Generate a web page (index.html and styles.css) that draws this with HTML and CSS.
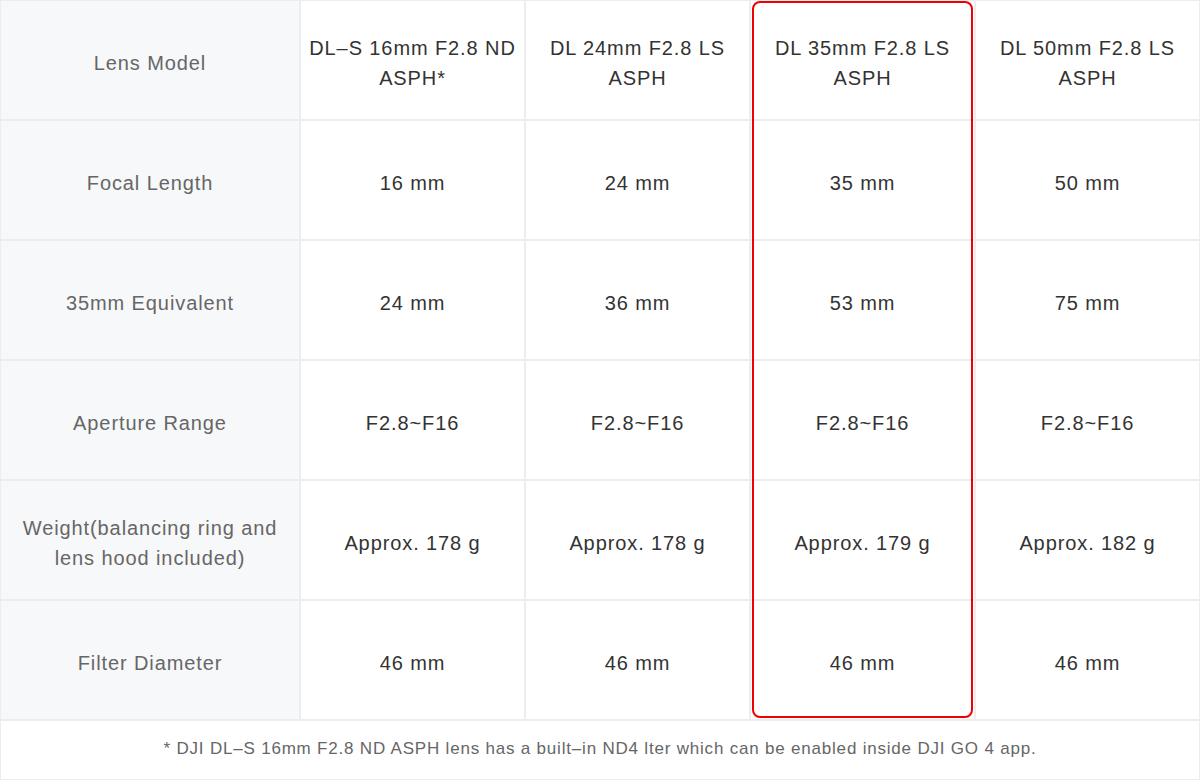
FILE: index.html
```html
<!DOCTYPE html>
<html lang="en">
<head>
<meta charset="utf-8">
<title>Lens Specs</title>
<link rel="stylesheet" href="styles.css">
</head>
<body>
<div class="specs">
  <table class="spec-table">
    <tbody>
      <tr>
        <th class="label">Lens Model</th>
        <td>DL–S 16mm F2.8 ND<br>ASPH*</td>
        <td>DL 24mm F2.8 LS<br>ASPH</td>
        <td>DL 35mm F2.8 LS<br>ASPH</td>
        <td>DL 50mm F2.8 LS<br>ASPH</td>
      </tr>
      <tr>
        <th class="label">Focal Length</th>
        <td>16 mm</td>
        <td>24 mm</td>
        <td>35 mm</td>
        <td>50 mm</td>
      </tr>
      <tr>
        <th class="label">35mm Equivalent</th>
        <td>24 mm</td>
        <td>36 mm</td>
        <td>53 mm</td>
        <td>75 mm</td>
      </tr>
      <tr>
        <th class="label">Aperture Range</th>
        <td>F2.8~F16</td>
        <td>F2.8~F16</td>
        <td>F2.8~F16</td>
        <td>F2.8~F16</td>
      </tr>
      <tr>
        <th class="label">Weight(balancing ring and<br>lens hood included)</th>
        <td>Approx. 178 g</td>
        <td>Approx. 178 g</td>
        <td>Approx. 179 g</td>
        <td>Approx. 182 g</td>
      </tr>
      <tr>
        <th class="label">Filter Diameter</th>
        <td>46 mm</td>
        <td>46 mm</td>
        <td>46 mm</td>
        <td>46 mm</td>
      </tr>
      <tr class="note-row">
        <td class="note" colspan="5">* DJI DL–S 16mm F2.8 ND ASPH lens has a built–in ND4 lter which can be enabled inside DJI GO 4 app.</td>
      </tr>
    </tbody>
  </table>
  <div class="highlight"></div>
</div>
</body>
</html>
```

FILE: styles.css
```css
html, body {
  margin: 0;
  padding: 0;
  background: #ffffff;
}

body {
  font-family: "Liberation Sans", Arial, sans-serif;
}

.specs {
  position: relative;
  width: 1200px;
}

.spec-table {
  border-collapse: separate;
  border-spacing: 0;
  table-layout: fixed;
  width: 1200px;
}

.spec-table th,
.spec-table td {
  border: 1px solid #ededed;
  height: 118px;
  padding: 6px 0 0 0;
  box-sizing: border-box;
  text-align: center;
  vertical-align: middle;
  font-size: 20px;
  line-height: 30px;
  letter-spacing: 0.9px;
  font-weight: normal;
  color: #333333;
  width: 225px;
}

.spec-table tr {
  height: 120px;
}

.spec-table th.label {
  width: 300px;
  background: #f7f8fa;
  color: #666666;
}

.spec-table tr.note-row {
  height: 60px;
}

.spec-table td.note {
  height: 60px;
  padding: 0 0 2px 0;
  font-size: 17px;
  line-height: 24px;
  letter-spacing: 0.8px;
  color: #666666;
}

.highlight {
  position: absolute;
  left: 752px;
  top: 1px;
  width: 221px;
  height: 717px;
  box-sizing: border-box;
  border: 2px solid #f00000;
  border-radius: 8px;
  pointer-events: none;
}
```
